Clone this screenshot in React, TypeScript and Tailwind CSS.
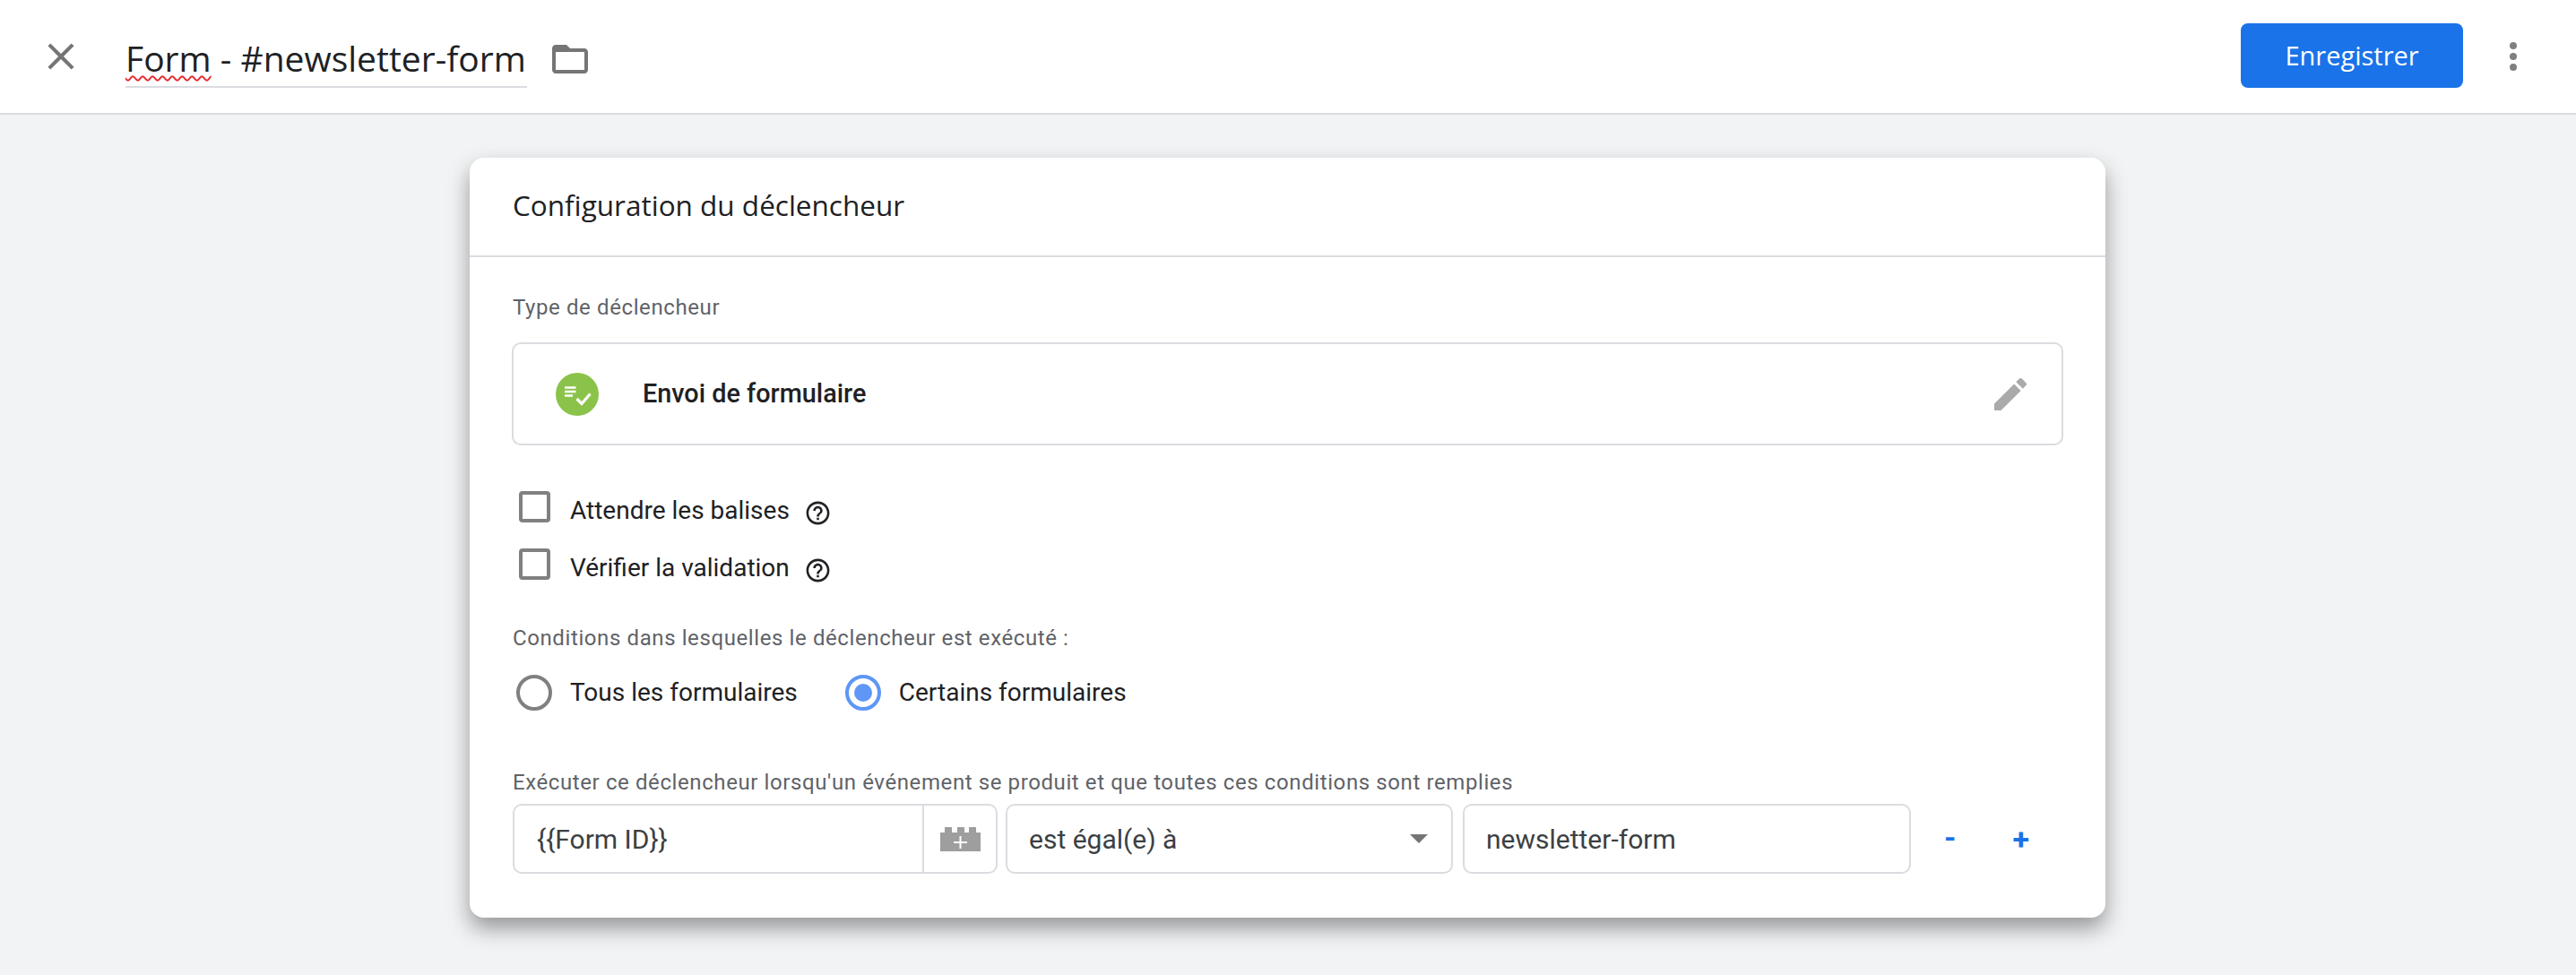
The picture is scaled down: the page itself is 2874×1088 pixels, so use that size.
const sans = "font-['Roboto',sans-serif]";
const display = "font-['Open_Sans',sans-serif]";

const CloseIcon = () => (
  <svg viewBox="0 0 24 24" className="w-[50px] h-[50px] fill-[#757575]">
    <path d="M19 6.41 17.59 5 12 10.59 6.41 5 5 6.41 10.59 12 5 17.59 6.41 19 12 13.41 17.59 19 19 17.59 13.41 12z" />
  </svg>
);

const FolderIcon = () => (
  <svg viewBox="0 0 24 24" className="w-[48px] h-[48px] fill-[#757575]">
    <path d="M20 6h-8l-2-2H4c-1.1 0-1.99.9-1.99 2L2 18c0 1.1.9 2 2 2h16c1.1 0 2-.9 2-2V8c0-1.1-.9-2-2-2zm0 12H4V8h16v10z" />
  </svg>
);

const PencilIcon = () => (
  <svg viewBox="0 0 24 24" className="w-[48px] h-[48px] fill-[#aaaaaa]">
    <path d="M3 17.25V21h3.75L17.81 9.94l-3.75-3.75L3 17.25zM20.71 7.04c.39-.39.39-1.02 0-1.41l-2.34-2.34c-.39-.39-1.02-.39-1.41 0l-1.83 1.83 3.75 3.75 1.83-1.83z" />
  </svg>
);

const HelpIcon = () => (
  <svg viewBox="0 0 24 24" className="w-[31px] h-[31px] fill-[#202124] shrink-0">
    <path d="M11 18h2v-2h-2v2zm1-16C6.48 2 2 6.48 2 12s4.48 10 10 10 10-4.48 10-10S17.52 2 12 2zm0 18c-4.41 0-8-3.59-8-8s3.59-8 8-8 8 3.59 8 8-3.59 8-8 8zm0-14c-2.21 0-4 1.79-4 4h2c0-1.1.9-2 2-2s2 .9 2 2c0 2-3 1.75-3 5h2c0-2.25 3-2.5 3-5 0-2.21-1.79-4-4-4z" />
  </svg>
);

const TriggerIcon = () => (
  <svg viewBox="0 0 48 48" className="w-12 h-12">
    <circle cx="24" cy="24" r="24" fill="#8bc34a" />
    <path d="M10 16.5h12.5M10 21h12.5M10 25.5h9" stroke="#fff" strokeWidth="2.6" fill="none" />
    <path d="M23.5 29l5.5 5.5 9.5-11" stroke="#fff" strokeWidth="3.2" fill="none" />
  </svg>
);

const BrickIcon = () => (
  <svg viewBox="0 0 45 27" className="w-[45px] h-[27px]">
    <path d="M0 6h5V0h8v6h6V0h8v6h5V0h8v6h5v21H0z" fill="#9e9e9e" />
    <path d="M15 17h15M22.5 10v14" stroke="#fff" strokeWidth="2" fill="none" />
  </svg>
);

const Checkbox = () => (
  <div className="ml-[8px] w-[35px] h-[35px] shrink-0 rounded-[4px] border-[4px] border-[#808080] bg-white" />
);

const CheckRow = ({ label }: { label: string }) => (
  <div className="flex items-center h-[35px]">
    <Checkbox />
    <span className={`ml-[22px] pt-[9px] text-[28px] leading-[30px] text-[#202124] ${sans}`}>{label}</span>
    <span className="ml-[16px] pt-[14px]">
      <HelpIcon />
    </span>
  </div>
);

const Radio = ({ checked = false }: { checked?: boolean }) => (
  <div
    className={`w-10 h-10 shrink-0 rounded-full border-[4px] flex items-center justify-center ${checked ? "border-[#5e97f6]" : "border-[#808080]"}`}
  >
    {checked && <div className="w-5 h-5 rounded-full bg-[#5e97f6]" />}
  </div>
);

const FieldLabel = ({ children }: { children: string }) => (
  <div className={`text-[24px] leading-[30px] tracking-[0.6px] text-[#5f6368] ml-px ${sans}`}>{children}</div>
);

export default function App() {
  return (
    <div className="w-[2874px] h-[1088px] overflow-hidden bg-[#f1f3f4]">
      <header className="h-[128px] bg-white border-b-2 border-[#dadce0] flex items-center pl-[43px]">
        <CloseIcon />
        <div className={`ml-[47px] mt-[6px] w-[448px] h-[64px] border-b-2 border-[#dadce0] text-[39px] leading-[62px] text-[#202124] whitespace-nowrap ${display}`}>
          <span className="underline decoration-wavy decoration-[#e5252a] decoration-2 underline-offset-[4px]">Form</span> - #newsletter-form
        </div>
        <div className="ml-[24px] mt-[5px]">
          <FolderIcon />
        </div>
        <button className={`ml-auto mb-[2px] w-[248px] h-[72px] rounded-[8px] bg-[#1a73e8] text-white text-[29px] font-medium ${display}`}>
          Enregistrer
        </button>
        <div className="ml-[52px] mr-[66px] flex flex-col gap-1">
          <div className="w-2 h-2 rounded-full bg-[#808080]" />
          <div className="w-2 h-2 rounded-full bg-[#808080]" />
          <div className="w-2 h-2 rounded-full bg-[#808080]" />
        </div>
      </header>

      <main className="pt-[48px] pl-[524px]">
        <section className="w-[1825px] bg-white rounded-2xl shadow-[0_12px_24px_rgba(0,0,0,0.38)]">
          <div className={`h-[111px] pb-[3px] border-b-2 border-[#dadce0] flex items-center pl-[48px] text-[31.5px] text-[#202124] ${display}`}>
            Configuration du déclencheur
          </div>
          <div className="pl-[47px] pr-[47px] pt-[41px] pb-[49px]">
            <FieldLabel>Type de déclencheur</FieldLabel>
            <div className="mt-[24px] h-[115px] rounded-[10px] border-2 border-[#dadce0] flex items-center pl-[47px] pr-[33px]">
              <TriggerIcon />
              <span className={`ml-[49px] text-[28.8px] font-medium text-[#202124] ${sans}`}>Envoi de formulaire</span>
              <span className="ml-auto">
                <PencilIcon />
              </span>
            </div>

            <div className="mt-[51px] flex flex-col gap-[29px]">
              <CheckRow label="Attendre les balises" />
              <CheckRow label="Vérifier la validation" />
            </div>

            <div className="mt-[50px]">
              <FieldLabel>Conditions dans lesquelles le déclencheur est exécuté :</FieldLabel>
            </div>

            <div className={`mt-[26px] flex items-center ml-[5px] text-[28px] leading-[30px] text-[#202124] ${sans}`}>
              <Radio />
              <span className="ml-[20px]">Tous les formulaires</span>
              <span className="ml-[53px]">
                <Radio checked />
              </span>
              <span className="ml-[20px]">Certains formulaires</span>
            </div>

            <div className="mt-[65px]">
              <FieldLabel>Exécuter ce déclencheur lorsqu'un événement se produit et que toutes ces conditions sont remplies</FieldLabel>
            </div>

            <div className={`mt-[9px] ml-px flex items-stretch h-[78px] text-[30px] text-[#3c4043] ${sans}`}>
              <div className="w-[541px] rounded-[10px] border-2 border-[#dadce0] flex">
                <div className="flex-1 flex items-center pl-[25px]">{"{{Form ID}}"}</div>
                <div className="w-[82px] border-l-2 border-[#dadce0] flex items-center justify-center">
                  <BrickIcon />
                </div>
              </div>
              <div className="ml-[9px] w-[499px] rounded-[10px] border-2 border-[#dadce0] flex items-center pl-[24px] pr-[26px]">
                <span>est égal(e) à</span>
                <div className="ml-auto w-0 h-0 border-x-[10px] border-x-transparent border-t-[10px] border-t-[#757575]" />
              </div>
              <div className="ml-[11px] w-[500px] rounded-[10px] border-2 border-[#dadce0] flex items-center pl-[24px]">
                newsletter-form
              </div>
              <span className="ml-[37px] pb-[4px] flex items-center text-[34px] font-bold text-[#1a73e8]">-</span>
              <span className="ml-[63px] flex items-center text-[34px] font-bold text-[#1a73e8]">+</span>
            </div>
          </div>
        </section>
      </main>
    </div>
  );
}
